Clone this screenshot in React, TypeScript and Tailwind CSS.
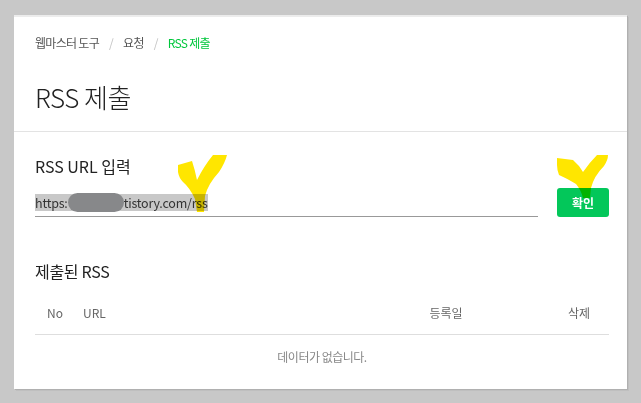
const font = { fontFamily: '"Noto Sans CJK KR", "Noto Sans", sans-serif' };

function Breadcrumb() {
  return (
    <nav className="flex h-[18px] items-center text-[12px] leading-[18px] tracking-[-0.7px] text-[#555]">
      <span>웹마스터 도구</span>
      <span className="mx-[10px] text-[#c4c4c4]">/</span>
      <span>요청</span>
      <span className="mx-[10px] text-[#c4c4c4]">/</span>
      <span className="text-[#00c73c]">RSS 제출</span>
    </nav>
  );
}

function Marks() {
  return (
    <svg
      className="pointer-events-none absolute left-0 top-0 mix-blend-multiply"
      width="641"
      height="403"
      viewBox="0 0 641 403"
    >
      <path
        d="M178 165 L192 161 Q195 170 197 180 Q204 166 213 155 L227 155 Q225 163 219 172 Q208 184 205 196 L204 212 L197 212 L195 199 Q190 188 183 182 Q179 178 178 172 Z"
        fill="#ffe600"
      />
      <path
        d="M557 158 L573 160 Q579 165 583 172 Q590 162 597 155 L608 155 Q608 160 604 166 Q594 176 591 188 L590 198 L583 198 Q581 190 576 184 Q566 178 559 175 Q557 170 557 165 Z"
        fill="#ffe600"
      />
    </svg>
  );
}

export default function App() {
  return (
    <div className="relative h-[403px] w-[641px] bg-[#c8c8c8] pl-[14px] pt-[15px]" style={font}>
      <div className="h-[374px] w-[613px] border-t-2 border-[#ececec] bg-white shadow-[1px_1px_0_#b0b0b0,2px_2px_0_#bfbfbf]">
        <header className="border-b border-[#e3e3e3] px-[21px] pb-[16px] pt-[17px]">
          <Breadcrumb />
          <h1 className="mt-[27px] text-[26px] font-light leading-[36px] tracking-[-0.5px] text-[#222]">
            RSS 제출
          </h1>
        </header>

        <section className="pl-[21px] pr-[18px] pt-[22px]">
          <h2 className="text-[16px] leading-[24px] text-[#222]">RSS URL 입력</h2>
          <div className="mt-[10px] flex items-start">
            <div className="flex h-[29px] w-[503px] shrink-0 items-center border-b border-[#999]">
              <span className="inline-flex h-[17px] items-center bg-[#c8c8c8] text-[12.5px] leading-[17px] tracking-[-0.2px] text-[#333]">
                https:
                <span className="inline-block h-[19px] w-[56px] rounded-full bg-[#87888a]" />
                tistory.com/rss
              </span>
            </div>
            <button className="ml-[19px] h-[29px] w-[52px] shrink-0 rounded-[3px] bg-[#03c75a] text-[12px] font-bold text-white">
              확인
            </button>
          </div>

          <h2 className="mt-[42px] text-[16px] leading-[24px] tracking-[-0.3px] text-[#222]">제출된 RSS</h2>
          <div className="mt-[8px] w-[574px] text-[12px] text-[#666]">
            <div className="flex h-[44px] items-center border-b border-[#dedede]">
              <span className="w-[36px] pl-[12px]">No</span>
              <span className="flex-1 pl-[12px]">URL</span>
              <span className="w-[100px] text-center">등록일</span>
              <span className="ml-[53px] w-[60px] text-center">삭제</span>
            </div>
            <div className="flex h-[44px] items-center justify-center tracking-[-0.5px] text-[#888]">
              데이터가 없습니다.
            </div>
          </div>
        </section>
      </div>
      <Marks />
    </div>
  );
}
